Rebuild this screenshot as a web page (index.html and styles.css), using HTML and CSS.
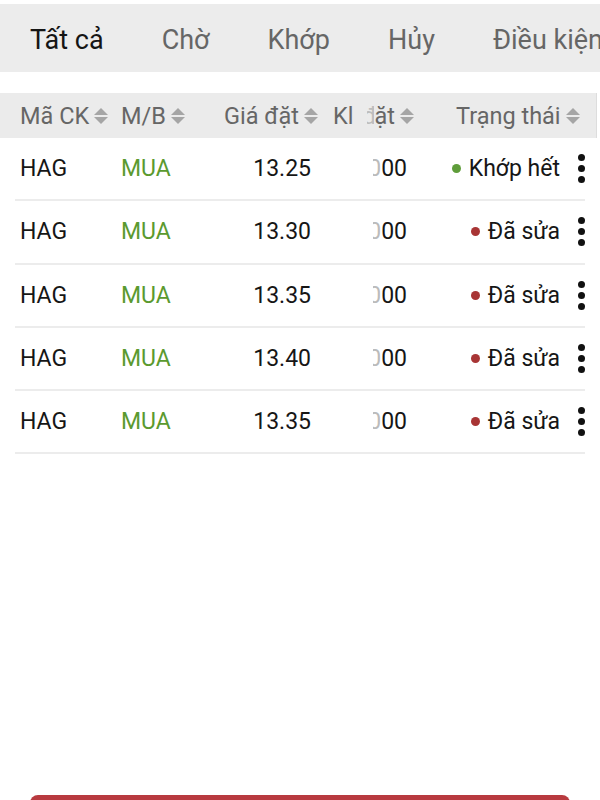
FILE: index.html
```html
<!DOCTYPE html>
<html lang="vi">

<head>
    <meta charset="UTF-8">
    <meta name="viewport" content="width=device-width, initial-scale=1.0">
    <title>Sổ lệnh</title>
    <link rel="stylesheet" href="styles.css">
</head>

<body>
    <div class="tabs">
        <span class="tab active">Tất cả</span>
        <span class="tab">Chờ</span>
        <span class="tab">Khớp</span>
        <span class="tab">Hủy</span>
        <span class="tab">Điều kiện</span>
    </div>

    <div class="orders">
        <div class="head">
            <div class="th c1">Mã CK <i class="sort"></i></div>
            <div class="th c2">M/B <i class="sort"></i></div>
            <div class="th c3">Giá đặt <i class="sort"></i></div>
            <div class="th c4">Kl <span class="cut">đ</span>ặt <i class="sort"></i></div>
            <div class="th c5">Trạng thái <i class="sort"></i></div>
        </div>

        <div class="row">
            <div class="c1">HAG</div>
            <div class="c2 buy">MUA</div>
            <div class="c3">13.25</div>
            <div class="c4"><span class="cut">0</span>00</div>
            <div class="c5"><i class="dot green"></i>Khớp hết</div>
            <div class="more"><i></i><i></i><i></i></div>
        </div>
        <div class="row">
            <div class="c1">HAG</div>
            <div class="c2 buy">MUA</div>
            <div class="c3">13.30</div>
            <div class="c4"><span class="cut">0</span>00</div>
            <div class="c5"><i class="dot red"></i>Đã sửa</div>
            <div class="more"><i></i><i></i><i></i></div>
        </div>
        <div class="row">
            <div class="c1">HAG</div>
            <div class="c2 buy">MUA</div>
            <div class="c3">13.35</div>
            <div class="c4"><span class="cut">0</span>00</div>
            <div class="c5"><i class="dot red"></i>Đã sửa</div>
            <div class="more"><i></i><i></i><i></i></div>
        </div>
        <div class="row">
            <div class="c1">HAG</div>
            <div class="c2 buy">MUA</div>
            <div class="c3">13.40</div>
            <div class="c4"><span class="cut">0</span>00</div>
            <div class="c5"><i class="dot red"></i>Đã sửa</div>
            <div class="more"><i></i><i></i><i></i></div>
        </div>
        <div class="row">
            <div class="c1">HAG</div>
            <div class="c2 buy">MUA</div>
            <div class="c3">13.35</div>
            <div class="c4"><span class="cut">0</span>00</div>
            <div class="c5"><i class="dot red"></i>Đã sửa</div>
            <div class="more"><i></i><i></i><i></i></div>
        </div>
    </div>

    <div class="footer">
        <button class="btn-order">Đặt lệnh</button>
    </div>
</body>

</html>
```

FILE: styles.css
```css
* {
    margin: 0;
    padding: 0;
    box-sizing: border-box;
}

body {
    background-color: #fff;
    font-family: Roboto, "Noto Sans", sans-serif;
    color: #161616;
    overflow: hidden;
}

/* tab bar */
.tabs {
    margin-top: 4px;
    height: 68px;
    background-color: #ececec;
    display: flex;
    align-items: center;
    gap: 58px;
    padding-left: 30px;
    padding-top: 4px;
    white-space: nowrap;
    overflow: hidden;
}

.tabs .tab {
    font-size: 27px;
    color: #666;
}

.tabs .tab.active {
    color: #151515;
}

/* order list */
.orders {
    margin-top: 21px;
}

.head,
.row {
    display: grid;
    grid-template-columns: 101px 99px 105px 105px 140px 30px;
    padding-left: 20px;
    align-items: center;
}

.head {
    height: 45px;
    width: 597px;
    background-color: #ebebeb;
    border-right: 1px solid #ddd;
    font-size: 23.5px;
    color: #666;
}

.head .th {
    display: flex;
    align-items: center;
    white-space: nowrap;
}

.head .c3 {
    padding-left: 4px;
}

.head .c4 {
    padding-left: 8px;
}

.head .c5 {
    grid-column: span 2;
    padding-left: 26px;
}

.sort {
    display: inline-block;
    flex-shrink: 0;
    width: 15px;
    height: 18px;
    margin-left: 5px;
    position: relative;
}

.sort::before,
.sort::after {
    content: "";
    position: absolute;
    left: 0;
    border-left: 7.5px solid transparent;
    border-right: 7.5px solid transparent;
}

.sort::before {
    top: 1px;
    border-bottom: 7px solid #a5a5a5;
}

.sort::after {
    bottom: 1px;
    border-top: 7px solid #a5a5a5;
}

.cut {
    display: inline-block;
    vertical-align: top;
    width: 8px;
    overflow: hidden;
    text-indent: -5px;
    color: #bbb;
}

.head .cut {
    margin-left: 14px;
    width: 7px;
    color: #bdbdbd;
}

.row {
    height: 63.3px;
    font-size: 23px;
    margin-left: 15px;
    margin-right: 15px;
    padding-left: 5px;
    border-bottom: 2px solid #ececec;
}

.row .buy {
    color: #5b9a2f;
}

.row .c3 {
    text-align: right;
    padding-right: 14px;
}

.row .c4 {
    text-align: right;
    padding-right: 23px;
}

.row .c5 {
    display: flex;
    align-items: center;
    justify-content: flex-end;
    padding-right: 10px;
    white-space: nowrap;
}

.dot {
    width: 9px;
    height: 9px;
    border-radius: 50%;
    margin-right: 8px;
}

.dot.green {
    background-color: #5f9d3a;
}

.dot.red {
    background-color: #a83535;
}

.more {
    display: flex;
    flex-direction: column;
    align-items: flex-start;
    gap: 4px;
    padding-left: 8px;
}

.more i {
    width: 7px;
    height: 7px;
    border-radius: 50%;
    background-color: #111;
}

/* bottom button */
.footer {
    margin-top: 341px;
    padding: 0 30px;
}

.btn-order {
    width: 100%;
    height: 56px;
    border: none;
    border-radius: 8px;
    background-color: #b83a3f;
    color: #fff;
    font-family: Roboto, sans-serif;
    font-size: 22px;
}
```
